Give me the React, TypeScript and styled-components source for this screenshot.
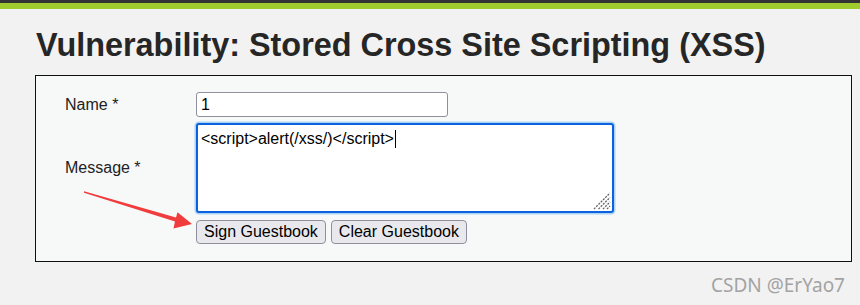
import React from 'react';
import styled, { createGlobalStyle } from 'styled-components';

const GlobalStyle = createGlobalStyle`
  html, body {
    margin: 0;
    padding: 0;
    background: #f2f2f2;
  }

  body {
    font-family: "Liberation Sans", Arial, sans-serif;
    color: #000;
  }
`;

const Page = styled.div`
  position: relative;
  width: 860px;
  height: 305px;
  overflow: hidden;
`;

const TopBar = styled.div`
  height: 3px;
  background: #333333;
  border-bottom: 6px solid #a0cb2f;
`;

const Title = styled.h1`
  margin: 18px 0 12px 36px;
  font-size: 32.4px;
  line-height: 36px;
  font-weight: bold;
  color: #262626;
`;

const Panel = styled.div`
  margin-left: 35px;
  width: 817px;
  box-sizing: border-box;
  border: 1px solid #111;
  background: #f7f8f8;
  padding: 16px 0 17px 29px;
`;

const Form = styled.div`
  display: grid;
  grid-template-columns: 131px auto;
  row-gap: 6px;
  align-items: center;
  justify-items: start;
`;

const Label = styled.div`
  font-size: 16px;
  color: #222;
`;

const TextInput = styled.div`
  width: 252px;
  height: 25px;
  box-sizing: border-box;
  border: 1px solid #8f8f9d;
  border-radius: 3px;
  background: #fff;
  padding: 0 4px;
  font-size: 16px;
  line-height: 23px;
`;

const MessageArea = styled.div`
  position: relative;
  width: 418px;
  height: 90px;
  box-sizing: border-box;
  border: 2px solid #0b62de;
  border-radius: 3px;
  box-shadow: 0 0 0 1.5px #aad3f5;
  background: #fff;
  padding: 5px 3px;
  font-size: 16px;
  line-height: 18px;
  white-space: pre;
`;

const Caret = styled.span`
  display: inline-block;
  width: 1px;
  height: 18px;
  margin-left: 1px;
  vertical-align: top;
  background: #000;
`;

const Grip = styled.svg`
  position: absolute;
  right: 1px;
  bottom: 1px;
`;

const Buttons = styled.div`
  display: flex;
  gap: 5px;
  margin-top: 1px;
`;

const Button = styled.button`
  height: 24px;
  box-sizing: border-box;
  padding: 0 7px;
  border: 1px solid #8f8f9d;
  border-radius: 4px;
  background: #e9e9ed;
  font-family: "Liberation Sans", Arial, sans-serif;
  font-size: 16px;
  line-height: 22px;
  color: #000;
`;

const Watermark = styled.div`
  margin-top: 10px;
  padding-right: 15px;
  text-align: right;
  font-family: "Noto Sans", sans-serif;
  font-size: 19px;
  line-height: 26px;
  color: #a3a3a3;
`;

const Annotation = styled.svg`
  position: absolute;
  left: 0;
  top: 0;
  pointer-events: none;
`;

export default function App() {
  return (
    <Page>
      <GlobalStyle />
      <TopBar />
      <Title>Vulnerability: Stored Cross Site Scripting (XSS)</Title>
      <Panel>
        <Form>
          <Label>Name *</Label>
          <TextInput>1</TextInput>
          <Label>Message *</Label>
          <MessageArea>
            {'<script>alert(/xss/)</script>'}
            <Caret />
            <Grip width="18" height="18" viewBox="0 0 18 18">
              <g stroke="#666" strokeWidth="1.3" strokeDasharray="2 1.2">
                <line x1="1" y1="17" x2="17" y2="1" />
                <line x1="5.5" y1="17" x2="17" y2="5.5" />
                <line x1="10" y1="17" x2="17" y2="10" />
                <line x1="14" y1="17" x2="17" y2="14" />
              </g>
            </Grip>
          </MessageArea>
          <span />
          <Buttons>
            <Button>Sign Guestbook</Button>
            <Button>Clear Guestbook</Button>
          </Buttons>
        </Form>
      </Panel>
      <Watermark>CSDN @ErYao7</Watermark>
      <Annotation width="860" height="305" viewBox="0 0 860 305">
        <polygon
          fill="#f03c3c"
          points="84,191.3 176,217.4 177.5,212.3 192,224 173.5,228.4 175,221.6 84,192.7"
        />
      </Annotation>
    </Page>
  );
}
